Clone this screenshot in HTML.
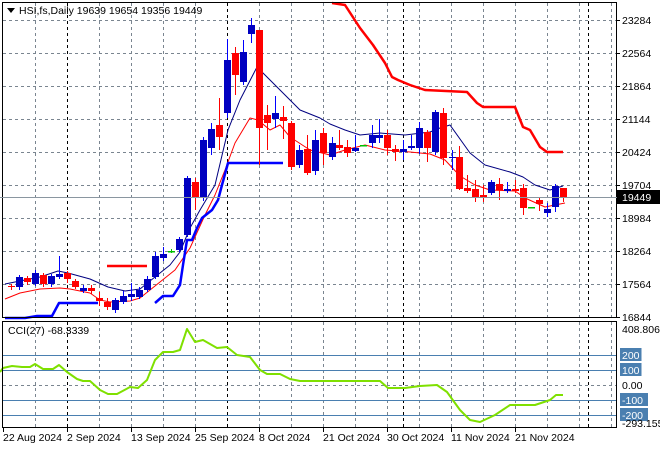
<!DOCTYPE html>
<html><head><meta charset="utf-8"><style>
html,body{margin:0;padding:0;background:#fff;}
svg{display:block;font-family:"Liberation Sans",sans-serif;font-size:10.5px;}
</style></head><body>
<svg id="s" width="660" height="450" xmlns="http://www.w3.org/2000/svg">
<rect width="660" height="450" fill="#fff"/>
<g id="grid"></g>
<g id="lines"></g>
<g id="candles"></g>
<!-- frames -->
<rect x="2.5" y="2.5" width="614" height="315" fill="none" stroke="#000"/>
<rect x="2.5" y="321.5" width="614" height="106" fill="none" stroke="#000"/>
<line x1="0" y1="197.5" x2="617" y2="197.5" stroke="#8a96a0"/>
<g fill="#000">
<polygon points="7,8 15,8 11,13"/>
<text x="19" y="14">HSI,fs,Daily  19639 19654 19356 19449</text>
<text x="8" y="334">CCI(27) -68.3339</text>
</g>
<g id="axis" fill="#000"></g>
<rect x="617" y="190" width="43" height="14" fill="#000"/>
<text x="622" y="201" fill="#fff">19449</text>
</svg>
<script>
const NS="http://www.w3.org/2000/svg";
function el(p,t,a,txt){const e=document.createElementNS(NS,t);for(const k in a)e.setAttribute(k,a[k]);if(txt)e.textContent=txt;document.getElementById(p).appendChild(e);return e;}
// grid
const hy=[20,53,86,119,152,185,218,251,284];
hy.forEach(y=>el('grid','line',{x1:3,x2:616,y1:y+.5,y2:y+.5,stroke:'#7a8590','stroke-dasharray':'3,3'}));
for(let x=35;x<616;x+=32){ if([67,227].includes(x))continue; el('grid','line',{x1:x+.5,x2:x+.5,y1:3,y2:317,stroke:'#7a8590','stroke-dasharray':'3,3'}); el('grid','line',{x1:x+.5,x2:x+.5,y1:322,y2:427,stroke:'#7a8590','stroke-dasharray':'3,3'});}
[67,227,403,588].forEach(x=>{el('grid','line',{x1:x+.5,x2:x+.5,y1:3,y2:317,stroke:'#000','stroke-dasharray':'3,3'});el('grid','line',{x1:x+.5,x2:x+.5,y1:322,y2:427,stroke:'#000','stroke-dasharray':'3,3'});});
// CCI levels
[[355,1],[370,1],[400,1],[415,1]].forEach(([y])=>el('grid','line',{x1:3,x2:616,y1:y+.5,y2:y+.5,stroke:'#4a7fb0'}));
el('grid','line',{x1:3,x2:616,y1:385.5,y2:385.5,stroke:'#7a8590','stroke-dasharray':'3,3'});
function pl(pts,c,w){el('lines','polyline',{points:pts.map(p=>p.join(',')).join(' '),fill:'none',stroke:c,'stroke-width':w,'stroke-linejoin':'round'});}
pl([[5,299],[20,293],[40,289],[60,288],[70,289],[90,293],[100,300],[110,302],[130,301],[140,298],[160,282],[175,270],[190,248],[205,215],[215,195],[225,170],[235,143],[250,118],[258,120],[270,130],[280,125],[290,137],[310,150],[330,155],[345,150],[365,145],[385,150],[410,152],[430,154],[445,160],[460,176],[475,185],[490,190],[515,191],[525,198],[545,207],[565,203]],'#f00',1);
pl([[5,284],[20,281],[40,277],[58,271],[68,273],[90,279],[108,287],[125,291],[140,289],[160,273],[170,265],[180,252],[190,228],[200,210],[215,185],[228,130],[240,100],[257,67],[265,75],[285,95],[300,110],[320,118],[330,124],[345,130],[360,135],[380,133],[405,135],[430,132],[440,128],[450,125],[470,153],[485,165],[510,172],[523,177],[535,185],[550,190],[563,186]],'#000080',1);
pl([[107,266],[147,266]],'#f00',2.5);
pl([[332,3],[345,5],[360,28],[373,45],[385,63],[392,77],[398,80],[410,85],[425,90],[467,92],[477,103],[483,107],[515,107],[523,127],[530,130],[540,147],[547,152],[563,152]],'#f00',2.5);
pl([[5,318],[20,318],[25,318],[37,316],[52,316],[59,303],[98,303]],'#0000ff',2.5);
pl([[155,303],[163,296],[173,296],[180,285],[183,265],[187,240],[192,240],[197,228],[202,218],[212,210],[218,200],[222,185],[228,163],[283,163]],'#0000ff',2.5);
// CCI
pl([[0,372],[3,368],[12,366],[22,367],[30,367],[35,364],[43,369],[53,369],[59,365],[67,372],[77,379],[83,381],[90,381],[100,390],[108,394],[117,394],[130,387],[138,388],[147,380],[155,360],[163,352],[173,352],[180,350],[187,329],[195,342],[203,340],[217,348],[227,347],[237,355],[250,357],[260,370],[267,374],[280,374],[290,379],[300,381],[380,381],[388,388],[405,388],[420,386],[437,385],[447,392],[460,410],[470,420],[480,422],[495,415],[510,405],[535,405],[550,400],[556,395],[563,395]],'#7fe000',2);
// candles
const C=[[11,286,287,284,290,'r'],[19,277,287,275,290,'b'],[27,278,282,276,285,'r'],[35,273,284,270,286,'b'],[43,275,284,273,287,'r'],[51,276,284,274,287,'b'],[59,274,277,256,279,'b'],[67,273,279,271,283,'r'],[75,281,287,279,289,'r'],[83,288,291,285,293,'b'],[91,288,291,285,294,'r'],[99,298,301,292,306,'r'],[107,302,307,298,310,'r'],[115,300,310,298,313,'b'],[123,296,302,291,304,'b'],[131,294,297,283,301,'b'],[139,290,297,287,299,'b'],[147,279,290,276,292,'b'],[155,256,277,252,279,'b'],[163,254,258,247,261,'b'],[171,251,251,249,253,'g'],[179,239,250,237,252,'b'],[187,178,235,176,237,'b'],[195,182,198,178,210,'r'],[203,140,198,137,201,'b'],[211,129,148,123,155,'b'],[219,125,137,98,150,'r'],[227,60,113,39,118,'b'],[235,53,75,47,95,'r'],[243,52,82,40,85,'b'],[251,25,34,18,43,'b'],[259,30,128,30,165,'r'],[267,115,123,105,150,'r'],[275,113,119,96,128,'b'],[283,117,121,106,139,'r'],[291,123,167,121,170,'r'],[299,150,165,145,168,'b'],[307,149,173,135,175,'r'],[315,140,171,130,175,'b'],[323,133,153,128,165,'r'],[332,143,157,137,160,'b'],[339,145,148,130,150,'r'],[347,147,153,140,157,'r'],[355,148,151,135,152,'b'],[363,145,145,145,146,'g'],[372,135,143,125,148,'b'],[379,135,138,119,143,'b'],[387,135,148,130,155,'r'],[395,149,152,145,161,'r'],[403,149,152,140,160,'b'],[411,146,148,135,150,'b'],[419,128,148,122,154,'b'],[427,132,148,130,162,'r'],[435,112,152,110,155,'b'],[443,113,158,108,165,'r'],[452,157,158,150,170,'b'],[459,157,189,146,190,'r'],[467,188,191,175,193,'r'],[475,189,197,180,202,'r'],[483,195,197,185,202,'r'],[491,182,193,180,195,'b'],[499,184,190,178,200,'r'],[507,189,191,182,193,'b'],[515,189,191,180,193,'r'],[523,188,208,184,215,'r'],[531,207,207,207,208,'g'],[539,200,204,198,211,'r'],[547,209,213,203,217,'b'],[555,186,207,184,212,'b'],[563,188,197,188,202,'r']];
C.forEach(([x,o,c,h,l,t])=>{
 const col=t=='r'?'#f00':t=='b'?'#0000c0':'#00c000';
 el('candles','line',{x1:x+.5,x2:x+.5,y1:h,y2:l,stroke:t=='b'?'#0000ff':col});
 const y1=Math.min(o,c),hh=Math.max(Math.abs(c-o),1);
 if(t=='g') el('candles','rect',{x:x-3,y:y1,width:7,height:1.5,fill:col});
 else el('candles','rect',{x:x-3,y:y1,width:7,height:hh,fill:col});
});
// axis labels
[[20,'23284'],[53,'22564'],[86,'21864'],[119,'21144'],[152,'20424'],[185,'19704'],[218,'18984'],[251,'18264'],[284,'17564'],[317,'16844']].forEach(([y,t])=>{el('axis','text',{x:622,y:y+4},t);el('axis','line',{x1:617,x2:620,y1:y+.5,y2:y+.5,stroke:'#000'});});
[[329,'408.8063',0],[355,'200',1],[370,'100',1],[385,'0.00',0],[400,'-100',1],[415,'-200',1],[423,'-293.1559',0]].forEach(([y,t,b])=>{
 if(b) el('axis','rect',{x:620,y:y-7,width:t.length*6.5+2,height:13,fill:'#4a7fb0'});
 el('axis','text',{x:622,y:y+4,fill:b?'#fff':'#000'},t);});
[[3,'22 Aug 2024'],[67,'2 Sep 2024'],[131,'13 Sep 2024'],[195,'25 Sep 2024'],[259,'8 Oct 2024'],[323,'21 Oct 2024'],[387,'30 Oct 2024'],[451,'11 Nov 2024'],[515,'21 Nov 2024']].forEach(([x,t])=>{el('axis','text',{x:x,y:441},t);el('axis','line',{x1:x+.5,x2:x+.5,y1:428,y2:432,stroke:'#000'});});
</script>
</body></html>
